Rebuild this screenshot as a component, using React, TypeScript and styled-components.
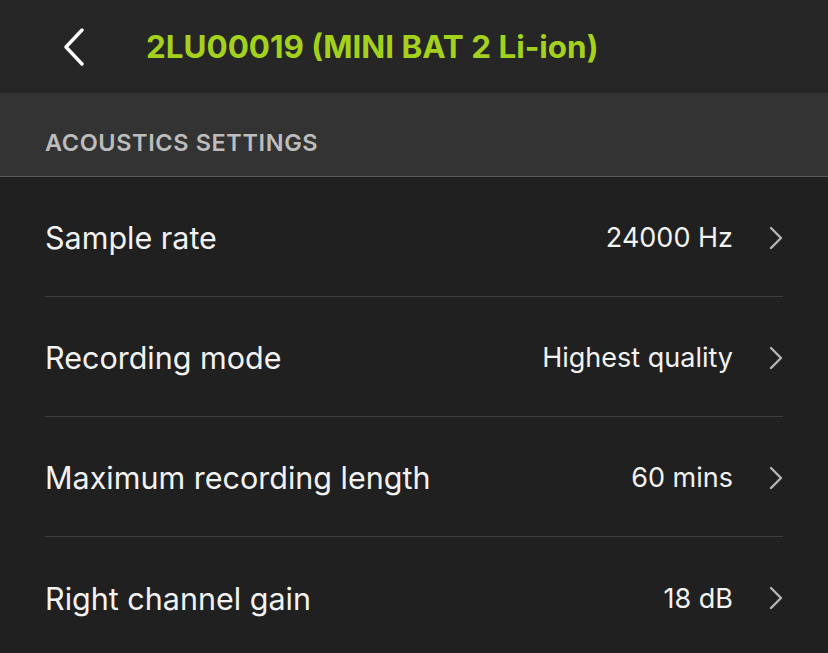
import React from "react";
import styled, { createGlobalStyle } from "styled-components";

const Global = createGlobalStyle`
  html, body { margin: 0; padding: 0; background: #202020; }
  body { font-family: Inter, "Noto Sans", sans-serif; -webkit-font-smoothing: antialiased; }
`;

const Page = styled.div`
  width: 828px;
  height: 653px;
  background: #202020;
  display: flex;
  flex-direction: column;
  overflow: hidden;
`;

const Header = styled.header`
  height: 93px;
  background: #262626;
  display: flex;
  align-items: center;
  flex-shrink: 0;
`;

const BackButton = styled.button`
  width: 147px;
  height: 93px;
  padding: 0 0 0 63px;
  border: none;
  background: transparent;
  display: flex;
  align-items: center;
  justify-content: flex-start;
  box-sizing: border-box;
`;

const Title = styled.h1`
  margin: 0 0 0 -1px;
  font-size: 31.4px;
  font-weight: 700;
  color: #a4d21c;
  letter-spacing: 0;
  line-height: 1;
  padding-top: 2px;
`;

const SectionHeader = styled.div`
  height: 84px;
  background: #333333;
  border-bottom: 1px solid #5a5a5a;
  box-sizing: border-box;
  display: flex;
  align-items: flex-end;
  padding: 0 0 19px 45px;
  flex-shrink: 0;
`;

const SectionTitle = styled.span`
  font-size: 23.5px;
  font-weight: 600;
  color: #bdbdbd;
  letter-spacing: 0.6px;
`;

const List = styled.div`
  display: flex;
  flex-direction: column;
  padding-left: 45px;
  padding-right: 45px;
`;

const Row = styled.div<{ $last?: boolean }>`
  height: 120px;
  display: flex;
  align-items: center;
  border-bottom: ${(p) => (p.$last ? "none" : "1px solid #3e3e3e")};
  box-sizing: border-box;
  padding-top: 2px;
`;

const Label = styled.span`
  flex: 1;
  font-size: 30.5px;
  color: #f2f2f2;
`;

const Value = styled.span`
  font-size: 27px;
  color: #f2f2f2;
  margin-right: 36px;
`;

const Chevron = () => (
  <svg width="14" height="24" viewBox="0 0 14 24" fill="none">
    <path d="M2 2 L12 12 L2 22" stroke="#b5b5b5" strokeWidth="2.4" strokeLinecap="round" strokeLinejoin="round" />
  </svg>
);

const BackIcon = () => (
  <svg width="22" height="38" viewBox="0 0 22 38" fill="none">
    <path d="M19 2 L3 19 L19 36" stroke="#ffffff" strokeWidth="3.4" strokeLinecap="round" strokeLinejoin="round" />
  </svg>
);

const rows = [
  { label: "Sample rate", value: "24000 Hz" },
  { label: "Recording mode", value: "Highest quality" },
  { label: "Maximum recording length", value: "60 mins" },
  { label: "Right channel gain", value: "18 dB" },
];

export default function App() {
  return (
    <Page>
      <Global />
      <Header>
        <BackButton aria-label="Back">
          <BackIcon />
        </BackButton>
        <Title>2LU00019 (MINI BAT 2 Li-ion)</Title>
      </Header>
      <SectionHeader>
        <SectionTitle>ACOUSTICS SETTINGS</SectionTitle>
      </SectionHeader>
      <List>
        {rows.map((r, i) => (
          <Row key={r.label} $last={i === rows.length - 1}>
            <Label>{r.label}</Label>
            <Value>{r.value}</Value>
            <Chevron />
          </Row>
        ))}
      </List>
    </Page>
  );
}
